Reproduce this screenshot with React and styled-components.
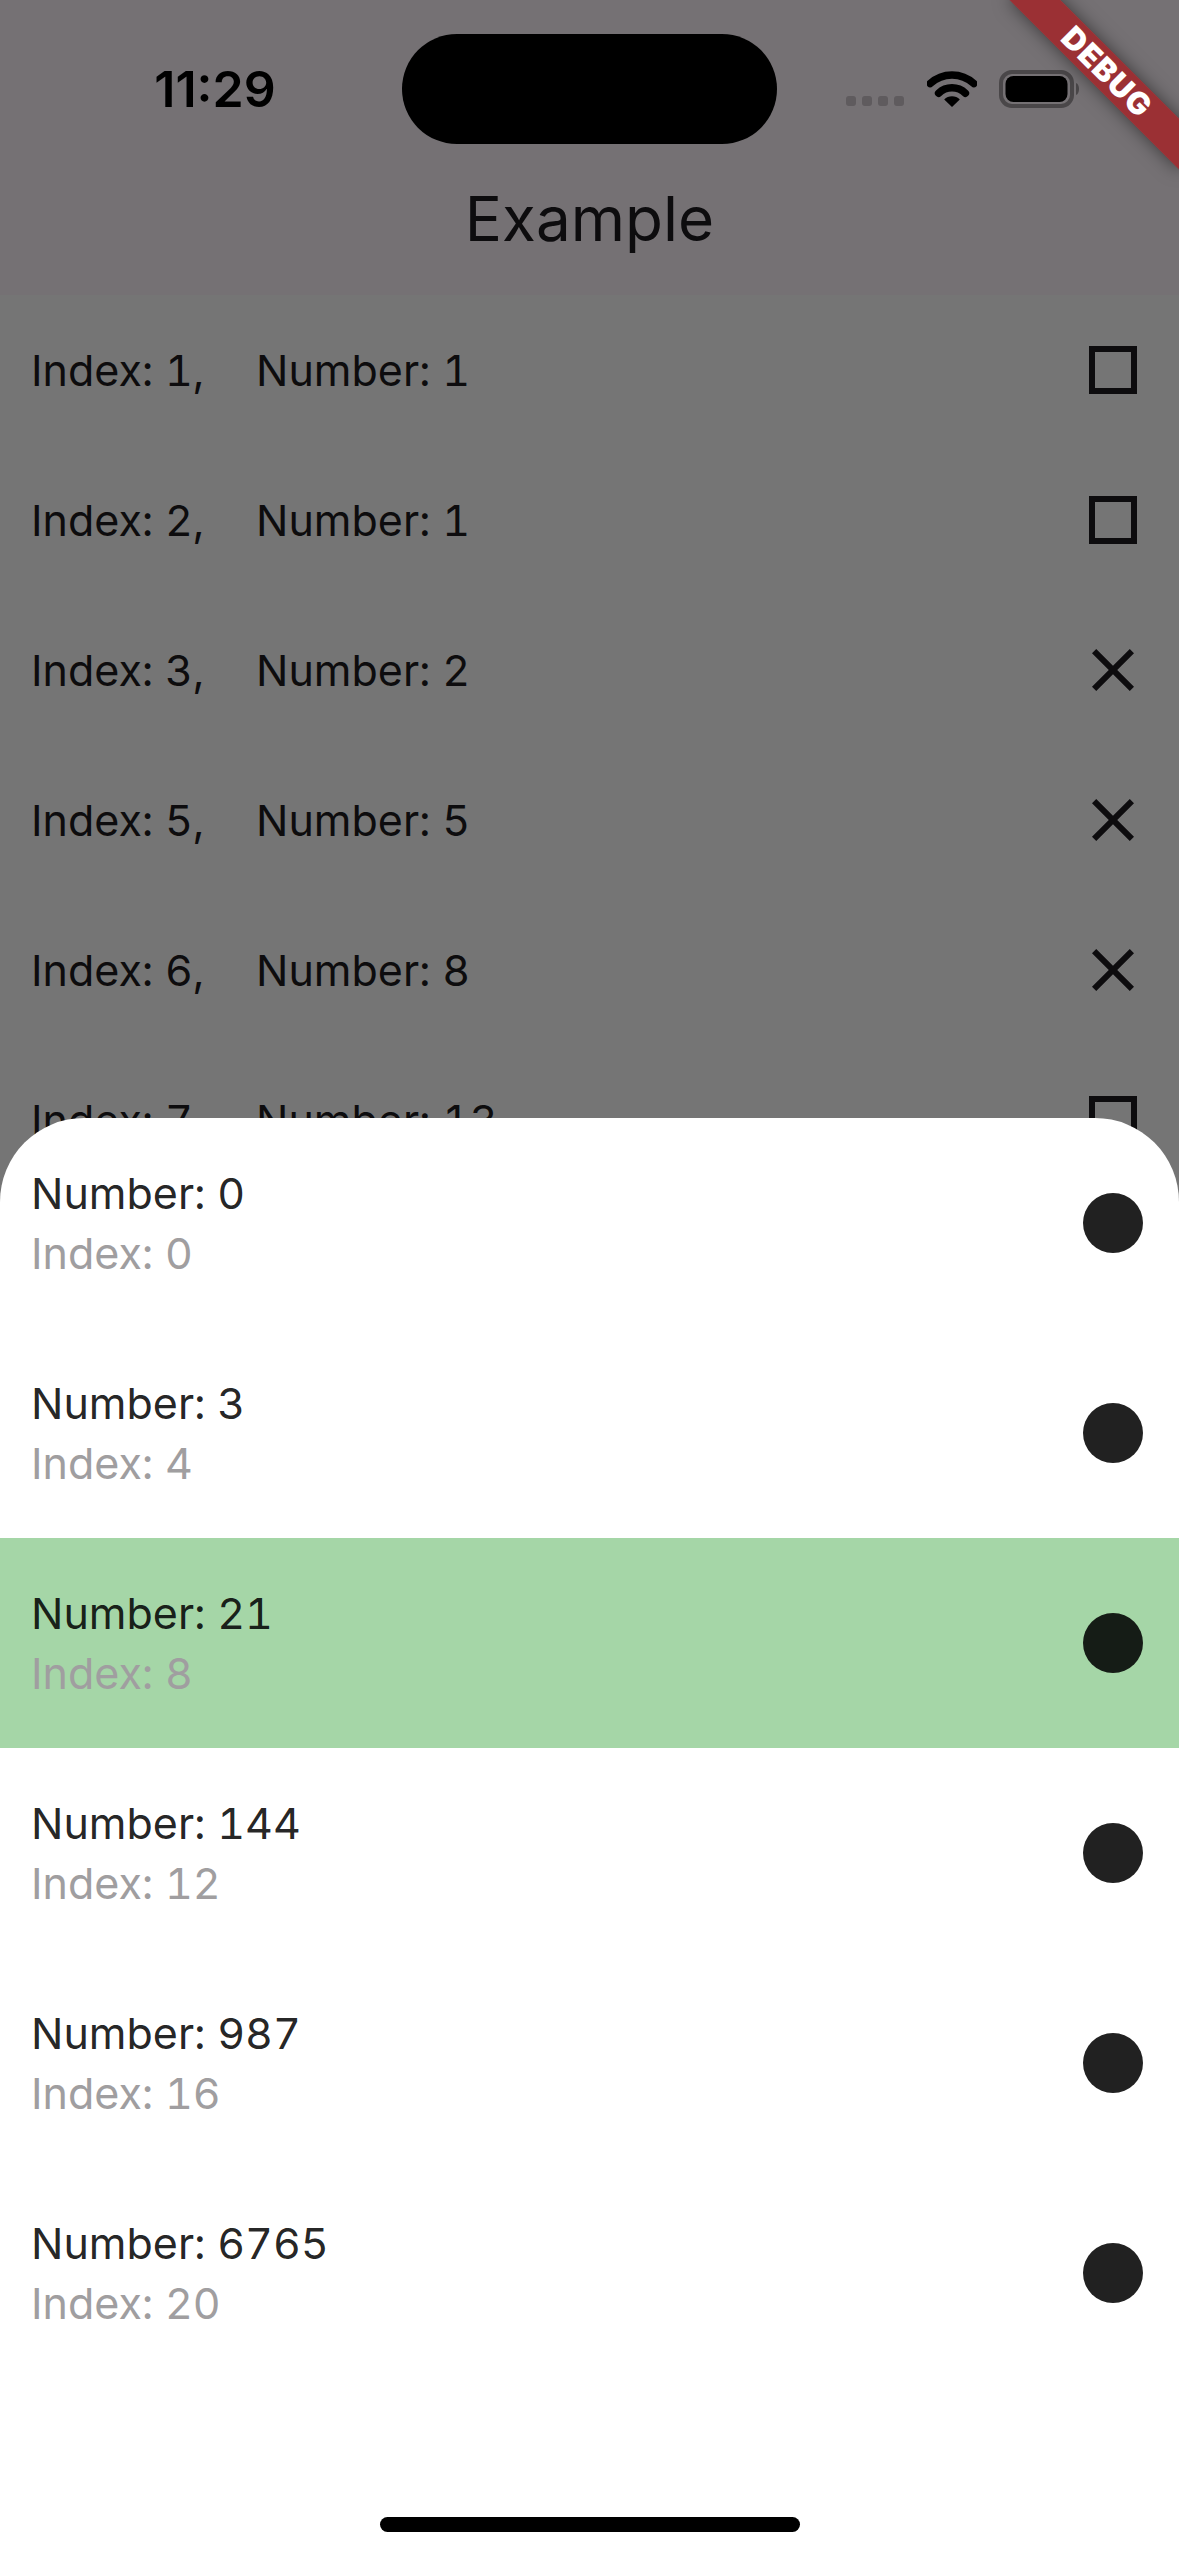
import React from 'react'
import styled, { createGlobalStyle } from 'styled-components'

const GlobalStyle = createGlobalStyle`
  html, body {
    margin: 0;
    padding: 0;
    background: #ffffff;
  }
  body {
    font-family: Inter, "Noto Sans", "Liberation Sans", sans-serif;
  }
`

const Screen = styled.div`
  position: relative;
  width: 1179px;
  height: 2556px;
  overflow: hidden;
  background: #ffffff;
`

/* page underneath the sheet */
const AppBar = styled.header`
  height: 295px;
  background: #fef6fc;
  display: flex;
  align-items: flex-end;
  justify-content: center;
`

const Title = styled.h1`
  margin: 0;
  height: 153px;
  line-height: 153px;
  font-size: 62px;
  font-weight: 400;
  color: #1d1b20;
`

const Row = styled.div`
  height: 150px;
  display: flex;
  align-items: center;
  padding: 0 30px 0 31px;
  font-size: 43px;
  font-variant-numeric: tabular-nums;
  color: #1d1b20;
`

const IndexCell = styled.span`
  width: 225px;
`

const NumberCell = styled.span`
  flex: 1;
`

const Mark = styled.svg`
  width: 72px;
  height: 72px;
  flex: none;
`

const Barrier = styled.div`
  position: absolute;
  inset: 0;
  background: rgba(0, 0, 0, 0.54);
`

/* bottom sheet */
const Sheet = styled.section`
  position: absolute;
  left: 0;
  right: 0;
  top: 1118px;
  bottom: 0;
  background: #ffffff;
  border-radius: 84px 84px 0 0;
  overflow: hidden;
  display: flex;
  flex-direction: column;
`

const SheetRow = styled.div`
  height: 210px;
  flex: none;
  display: flex;
  align-items: center;
  justify-content: space-between;
  padding: 0 36px 0 31px;
  background: ${p => (p.$selected ? '#a5d6a7' : 'transparent')};
`

const Lines = styled.div`
  display: flex;
  flex-direction: column;
`

const Primary = styled.span`
  font-size: 43px;
  line-height: 60px;
  font-variant-numeric: tabular-nums;
  color: rgba(0, 0, 0, 0.87);
`

const Secondary = styled(Primary)`
  color: #a09ea0;
`

const Dot = styled.span`
  width: 60px;
  height: 60px;
  border-radius: 50%;
  background: rgba(0, 0, 0, 0.87);
`

const HomeIndicator = styled.div`
  width: 420px;
  height: 15px;
  margin: 139px auto 0;
  border-radius: 8px;
  background: #000000;
`

/* system chrome */
const StatusBar = styled.div`
  position: absolute;
  top: 34px;
  left: 0;
  right: 0;
  height: 110px;
  display: flex;
  align-items: center;
`

const Clock = styled.div`
  width: 374px;
  padding-left: 28px;
  text-align: center;
  font-size: 50px;
  font-weight: 600;
  color: #000000;
`

const Island = styled.div`
  width: 375px;
  height: 110px;
  border-radius: 55px;
  background: #000000;
`

const Indicators = styled.div`
  margin-left: 69px;
  display: flex;
  align-items: center;
`

const Signal = styled.div`
  display: flex;
  gap: 6px;
  padding-top: 24px;
`

const Bar = styled.span`
  width: 10px;
  height: 10px;
  border-radius: 3px;
  background: #5f5b5e;
`

const Wifi = styled.svg`
  width: 50px;
  height: 38px;
  margin-left: 23px;
`

const Battery = styled.svg`
  width: 84px;
  height: 38px;
  margin-left: 22px;
`

const DebugBanner = styled.div`
  position: absolute;
  top: 54px;
  left: 987px;
  width: 240px;
  height: 36px;
  transform: rotate(45deg);
  background: rgba(170, 24, 28, 0.72);
  box-shadow: 0 0 18px rgba(0, 0, 0, 0.5);
  color: #ffffff;
  font-family: Inter, "Liberation Sans", sans-serif;
  font-weight: 900;
  font-size: 31px;
  line-height: 36px;
  text-align: center;
  letter-spacing: 1px;
`

const pageRows = [
  { index: 1, number: 1, mark: 'box' },
  { index: 2, number: 1, mark: 'box' },
  { index: 3, number: 2, mark: 'cross' },
  { index: 5, number: 5, mark: 'cross' },
  { index: 6, number: 8, mark: 'cross' },
  { index: 7, number: 13, mark: 'box' },
]

const sheetRows = [
  { number: 0, index: 0 },
  { number: 3, index: 4 },
  { number: 21, index: 8, selected: true },
  { number: 144, index: 12 },
  { number: 987, index: 16 },
  { number: 6765, index: 20 },
]

const MarkIcon = ({ kind }) => (
  <Mark viewBox="0 0 72 72">
    {kind === 'box' ? (
      <rect x="15" y="15" width="42" height="42" fill="none" stroke="#1d1b20" strokeWidth="6" />
    ) : (
      <path
        transform="scale(3)"
        fill="#1d1b20"
        d="M19 6.41L17.59 5 12 10.59 6.41 5 5 6.41 10.59 12 5 17.59 6.41 19 12 13.41 17.59 19 19 17.59 13.41 12z"
      />
    )}
  </Mark>
)

export default function App() {
  return (
    <>
      <GlobalStyle />
      <Screen>
        <AppBar>
          <Title>Example</Title>
        </AppBar>
        {pageRows.map(r => (
          <Row key={r.index}>
            <IndexCell>Index: {r.index},</IndexCell>
            <NumberCell>Number: {r.number}</NumberCell>
            <MarkIcon kind={r.mark} />
          </Row>
        ))}

        <Barrier />

        <Sheet>
          {sheetRows.map(r => (
            <SheetRow key={r.index} $selected={r.selected}>
              <Lines>
                <Primary>Number: {r.number}</Primary>
                <Secondary>Index: {r.index}</Secondary>
              </Lines>
              <Dot />
            </SheetRow>
          ))}
          <HomeIndicator />
        </Sheet>

        <StatusBar>
          <Clock>11:29</Clock>
          <Island />
          <Indicators>
            <Signal>
              <Bar />
              <Bar />
              <Bar />
              <Bar />
            </Signal>
            <Wifi viewBox="0 0 50 38">
              <path d="M25 37 L17.2 29.4 A11 11 0 0 1 32.8 29.4 Z" fill="#000" />
              <path d="M11.6 23.2 A19.5 19.5 0 0 1 38.4 23.2" fill="none" stroke="#000" strokeWidth="7.5" strokeLinecap="round" />
              <path d="M3.2 13.6 A32 32 0 0 1 46.8 13.6" fill="none" stroke="#000" strokeWidth="7.5" strokeLinecap="round" />
            </Wifi>
            <Battery viewBox="0 0 84 38">
              <rect x="2" y="2" width="71" height="34" rx="11" fill="none" stroke="#4a4749" strokeWidth="4" />
              <rect x="6.5" y="6" width="62" height="26" rx="8" fill="#000" />
              <path d="M77 13 C81 14 81 24 77 25 Z" fill="#4a4749" />
            </Battery>
          </Indicators>
        </StatusBar>

        <DebugBanner>DEBUG</DebugBanner>
      </Screen>
    </>
  )
}
